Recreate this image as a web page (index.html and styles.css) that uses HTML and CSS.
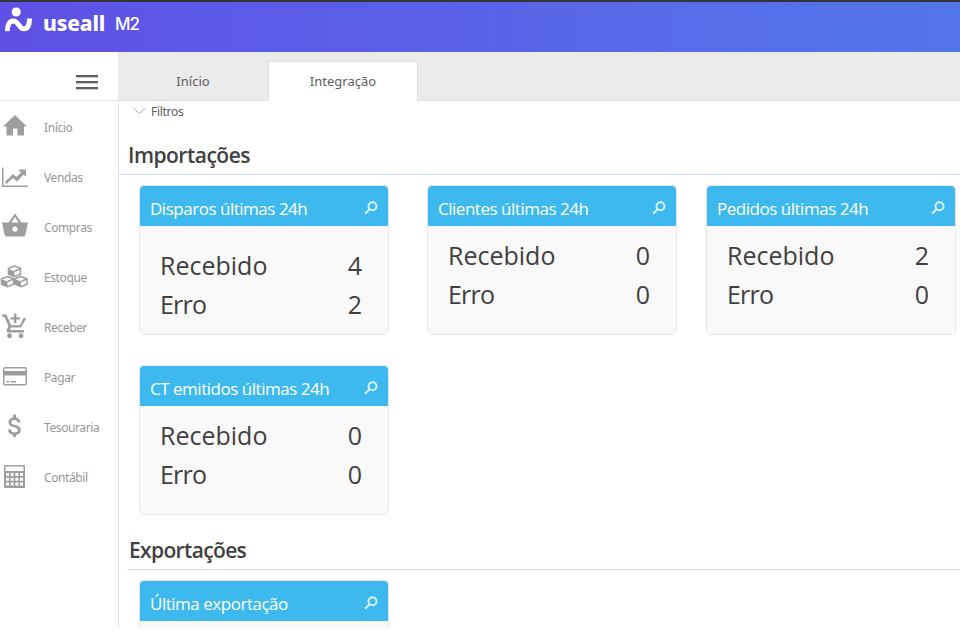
FILE: index.html
```html
<!DOCTYPE html>
<html lang="pt-BR">
<head>
<meta charset="utf-8">
<title>Useall M2</title>
<link rel="stylesheet" href="styles.css">
</head>
<body>
<div class="app">
  <header class="topbar">
    <svg class="mark" viewBox="0 0 28 26"><circle cx="12.200" cy="5" r="4.600" fill="#fff"/><path d="M3.400 24.200C3.200 18 5.500 14 9.200 14c5.800 0 5.500 7.800 10.800 7.800 4 0 5.500-4 5.500-10.300" fill="none" stroke="#fff" stroke-width="4.900"/></svg>
    <span class="brand">useall</span>
    <span class="version">M2</span>
  </header>
  <div class="shell">
    <aside class="sidebar">
      <div class="menu"><div class="burger"><i></i><i></i><i></i></div></div>
      <nav class="nav">
        <a class="item"><svg viewBox="0 0 28 28"><path d="M15 2 3 13.500h3.500v9H13v-7h4.500v7H24v-9h3z"/></svg><span>Início</span></a>
        <a class="item"><svg viewBox="0 0 28 28"><path d="M2 4.500h1.500v18H28V24H2zM5 19l8-8 3.500 3 4.500-4.500L18.500 6.500H26v7l-2.500-2L17 18.500 13 15l-6.500 6z"/></svg><span>Vendas</span></a>
        <a class="item"><svg viewBox="0 0 28 28"><path fill-rule="evenodd" d="M15 .5 21.500 9.500H28l-2.500 12a2.500 2.500 0 0 1-2.500 2H7a2.500 2.500 0 0 1-2.500-2L2 9.500h6.500zM15 4l-3.600 5.500h7.200zM15 13.500a2.600 2.600 0 1 0 .01 0z"/></svg><span>Compras</span></a>
        <a class="item"><svg class="outline" viewBox="0 0 28 28"><path d="m14.500 3 6 2.300v6l-6 2.500-6-2.500v-6zM7.500 13.500l6 2.300v5.500l-6 2.500-6-2.500v-5.500zM21 13.500l6 2.300v5.500l-6 2.500-6-2.500v-5.500z"/><path class="solid" d="m8.500 6 6 2.200v5.600l-6-2.500zM1.500 16.300l6 2.200v5.300l-6-2.500zM15 16.300l6 2.200v5.300l-6-2.500z"/><path d="m14.500 8.200 6-2.500M7.500 18.500l6-2.500M21 18.500l6-2.500"/></svg><span>Estoque</span></a>
        <a class="item"><svg viewBox="0 0 28 28"><path d="M14 .5h2.400v3.800H20v2.200h-3.600v3.600H14V6.500h-3.600V4.300H14zM2 1.500h4.300l5 10.700h8.500L23.800 4.500l2.200 1.200-4.400 7.700c-.5.900-1.200 1.200-2 1.200h-8.600l-1.300 2.500H24v2.300H8.700c-2 0-2.700-1.500-1.900-3l1.700-3.100L4.300 3.800H2zM9.500 20.300a2.400 2.400 0 1 0 .01 0zM21 20.300a2.400 2.400 0 1 0 .01 0z"/></svg><span>Receber</span></a>
        <a class="item"><svg viewBox="0 0 28 28"><path fill-rule="evenodd" d="M5 4h20a2 2 0 0 1 2 2v14.500a2 2 0 0 1-2 2H5a2 2 0 0 1-2-2V6a2 2 0 0 1 2-2zM4.500 5.500V8h21V5.500zM4.500 12.500V21h21v-8.500zM6.500 18h3v1.500h-3zM11 18h5v1.500h-5z"/></svg><span>Pagar</span></a>
        <a class="item"><svg viewBox="0 0 28 28"><path d="M13 1.500h3v3c2.800.5 4.400 2.400 4.500 5h-3c-.2-1.700-1.100-2.600-3.100-2.600-1.900 0-3 .9-3 2.300 0 1.400 1.100 2.100 3.900 2.800 3.600.9 5.500 2.400 5.500 5.200 0 2.500-1.700 4.100-4.800 4.700v2h-3v-2c-3-.6-5-2.400-5.100-5.300h3c.2 1.900 1.500 2.900 3.700 2.900s3.200-1 3.200-2.300c0-1.500-1-2.300-4-3-3.400-.8-5.300-2.300-5.300-4.900 0-2.500 1.700-4.200 4.500-4.800z"/></svg><span>Tesouraria</span></a>
        <a class="item"><svg viewBox="0 0 28 28"><path fill-rule="evenodd" d="M5 2h19a1 1 0 0 1 1 1v21a1 1 0 0 1-1 1H5a1 1 0 0 1-1-1V3a1 1 0 0 1 1-1zM5.500 3.500V8h18V3.500zM6 10h3v3H6zM10.700 10h3v3h-3zM15.400 10h3v3h-3zM20 10h3v3h-3zM6 14.700h3v3H6zM10.700 14.700h3v3h-3zM15.400 14.700h3v3h-3zM20 14.700h3v3h-3zM6 19.500h3v3H6zM10.700 19.500h3v3h-3zM15.400 19.500h3v3h-3zM20 19.500h3v3h-3z"/></svg><span>Contábil</span></a>
      </nav>
    </aside>
    <main class="main">
      <div class="tabs"><div class="tab">Início</div><div class="tab active">Integração</div></div>
      <div class="filters"><svg viewBox="0 0 13 8"><path d="m.5 1 6 5.500L12.500 1" fill="none" stroke="#aaa"/></svg><span>Filtros</span></div>
      <h2 class="title">Importações</h2>
      <section class="cards">
        <article class="card roomy"><header><span>Disparos últimas 24h</span><svg class="lens" viewBox="0 0 14 14"><circle cx="8.500" cy="5.300" r="4"/><path d="M5.500 8.300 1 12.700"/></svg></header><dl><div><dt>Recebido</dt><dd>4</dd></div><div><dt>Erro</dt><dd>2</dd></div></dl></article>
        <article class="card"><header><span>Clientes últimas 24h</span><svg class="lens" viewBox="0 0 14 14"><circle cx="8.500" cy="5.300" r="4"/><path d="M5.500 8.300 1 12.700"/></svg></header><dl><div><dt>Recebido</dt><dd>0</dd></div><div><dt>Erro</dt><dd>0</dd></div></dl></article>
        <article class="card"><header><span>Pedidos últimas 24h</span><svg class="lens" viewBox="0 0 14 14"><circle cx="8.500" cy="5.300" r="4"/><path d="M5.500 8.300 1 12.700"/></svg></header><dl><div><dt>Recebido</dt><dd>2</dd></div><div><dt>Erro</dt><dd>0</dd></div></dl></article>
        <article class="card"><header><span>CT emitidos últimas 24h</span><svg class="lens" viewBox="0 0 14 14"><circle cx="8.500" cy="5.300" r="4"/><path d="M5.500 8.300 1 12.700"/></svg></header><dl><div><dt>Recebido</dt><dd>0</dd></div><div><dt>Erro</dt><dd>0</dd></div></dl></article>
      </section>
      <h2 class="title exports">Exportações</h2>
      <section class="cards">
        <article class="card"><header><span>Última exportação</span><svg class="lens" viewBox="0 0 14 14"><circle cx="8.500" cy="5.300" r="4"/><path d="M5.500 8.300 1 12.700"/></svg></header></article>
      </section>
    </main>
  </div>
</div>
</body>
</html>
```
FILE: styles.css
```css
* { box-sizing: border-box; }
body { margin: 0; background: #fff; font-family: "Noto Sans", "Open Sans", sans-serif; color: #404040; }
.app { height: 628px; width: 960px; overflow: hidden; }
.topbar { height: 52px; border-top: 2px solid #35363a; background: linear-gradient(90deg, #5f50e6, #5377e9); display: flex; padding: 5px 0 0 4px; color: #fff; }
.mark { width: 28px; height: 26px; }
.brand { font: 800 21px/28px "Noto Sans", sans-serif; margin: 2px 0 0 11px; width: 62px; letter-spacing: -.15px; }
.version { font: 500 17px/28px Inter, sans-serif; margin: 3px 0 0 10px; letter-spacing: -1px; }
.shell { display: flex; height: 576px; }
.sidebar { width: 119px; border-right: 1px solid #e2e2e2; flex: none; }
.menu { height: 49px; border-bottom: 1px solid #e2e2e2; padding: 23px 0 0 76px; }
.burger { width: 22px; display: grid; gap: 4px; }
.burger i { height: 2px; background: #606060; box-shadow: 0 1px #ccc; }
.item { display: flex; height: 50px; align-items: center; font-size: 12px; letter-spacing: -.4px; color: #969696; }
.item span { padding-top: 2px; }
.item svg { width: 28px; height: 28px; margin: 2px 16px 0 0; fill: #9e9e9e; }
.item svg.outline { fill: none; stroke: #9e9e9e; stroke-width: 1.5; }
.outline .solid { fill: #9e9e9e; stroke: none; }
.main { width: 841px; flex: none; }
.tabs { display: flex; height: 49px; margin-left: -1px; background: #ebebeb; border-bottom: 1px solid #e0e0e0; padding-top: 9px; }
.tab { width: 150px; height: 40px; line-height: 40px; font-size: 13px; text-align: center; color: #606060; }
.tab.active { border: 1px solid #e0e0e0; border-bottom: 0; border-radius: 4px 4px 0 0; background: #fff; line-height: 38px; }
.filters { display: flex; align-items: center; height: 20px; padding-left: 14px; font-size: 12px; letter-spacing: -.3px; gap: 5px; color: #606060; }
.filters svg { width: 13px; height: 8px; }
.title { margin: 0; height: 54px; padding: 18px 0 0 9px; font: 600 21px/32px "Open Sans", sans-serif; letter-spacing: -.5px; border-bottom: 1px solid #ccdafb; }
.exports { margin: 19px 0 0 8px; height: 36px; padding: 0 0 0 2px; letter-spacing: -.65px; border-color: #dce2f7; }
.cards { display: grid; grid-template-columns: 288px 279px 250px; padding: 10px 0 0 20px; row-gap: 30px; }
.card { width: 250px; height: 150px; border: 1px solid #e7e7e7; border-radius: 5px; background: #f9f9f9; overflow: hidden; }
.card header { height: 40px; padding: 5px 10px 0; background: #3db9ed; color: #fff; display: flex; justify-content: space-between; font: 17px/36px "Open Sans", sans-serif; letter-spacing: -.48px; }
.lens { width: 14px; height: 14px; margin-top: 10px; fill: none; stroke: #d8f2fc; stroke-width: 2; }
.card dl { margin: 0; padding: 10px 26px 0 20px; font: 25px/39px "Open Sans", sans-serif; }
.card.roomy dl { padding-top: 20px; }
.card dl div { display: flex; justify-content: space-between; }
.card dl div + div dt { letter-spacing: -.8px; }
.card dd { margin: 0; }
```
